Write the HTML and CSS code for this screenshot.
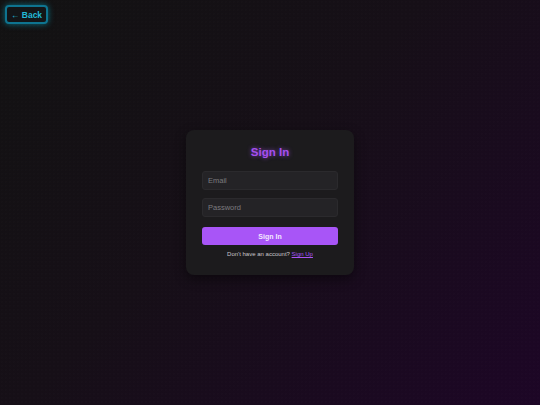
FILE: index.html
```html
<!DOCTYPE html>
<html>
<head>
<meta charset="utf-8">
<link rel="stylesheet" href="styles.css">
</head>
<body>
<div class="page">
  <button class="back">← Back</button>
  <div class="card">
    <h1 class="title">Sign In</h1>
    <input class="field" type="email" placeholder="Email">
    <input class="field" type="password" placeholder="Password">
    <button class="submit">Sign In</button>
    <p class="footer">Don't have an account? <a class="link" href="#">Sign Up</a></p>
  </div>
</div>
</body>
</html>
```

FILE: styles.css
```css
* { box-sizing: border-box; }
html, body { margin: 0; padding: 0; }
body {
  width: 540px;
  height: 405px;
  font-family: "Liberation Sans", Arial, sans-serif;
  background:
    radial-gradient(circle, rgba(255,255,255,0.015) 0.6px, transparent 0.8px) 0 0 / 4px 4px,
    linear-gradient(135deg, #121212 0%, #160f17 45%, #1d0626 100%);
  overflow: hidden;
}
.page {
  position: relative;
  height: 405px;
  display: flex;
  align-items: center;
  justify-content: center;
}
.back {
  position: absolute;
  top: 5px;
  left: 5px;
  width: 43px;
  height: 19px;
  border: 2px solid #0e7490;
  border-radius: 4px;
  background: #131517;
  color: #22b8d6;
  font-family: "Liberation Sans", Arial, sans-serif;
  font-weight: bold;
  font-size: 8.5px;
  padding: 0;
  box-shadow: 0 0 6px rgba(6,182,212,0.55);
}
.card {
  width: 168px;
  height: 145px;
  padding: 15px 16px;
  background: #1c1b1d;
  border-radius: 8px;
  box-shadow: 0 4px 12px rgba(0,0,0,0.45);
  display: flex;
  flex-direction: column;
}
.title {
  margin: 0 0 11px;
  text-align: center;
  font-size: 11.5px;
  line-height: 15px;
  font-weight: bold;
  color: #a64ff0;
  text-shadow: 0 0 4px rgba(168,85,247,0.7);
}
.field {
  height: 19px;
  width: 100%;
  margin: 0 0 8px;
  padding: 0 5px;
  border: 1px solid #2b2a2d;
  border-radius: 3px;
  background: #242326;
  color: #ddd;
  font-family: "Liberation Sans", Arial, sans-serif;
  font-size: 7.5px;
  outline: none;
}
.field::placeholder { color: #7c7b7f; }
.field + .field { margin-bottom: 10px; }
.submit {
  height: 18px;
  width: 100%;
  border: none;
  border-radius: 3px;
  background: #a855f7;
  color: #f3e8ff;
  font-family: "Liberation Sans", Arial, sans-serif;
  font-weight: bold;
  font-size: 7px;
  padding: 0;
}
.footer {
  margin: 5px 0 0;
  text-align: center;
  font-size: 6px;
  line-height: 8px;
  color: #c9c7cc;
}
.link {
  color: #a855f7;
  text-decoration: underline;
}
```
